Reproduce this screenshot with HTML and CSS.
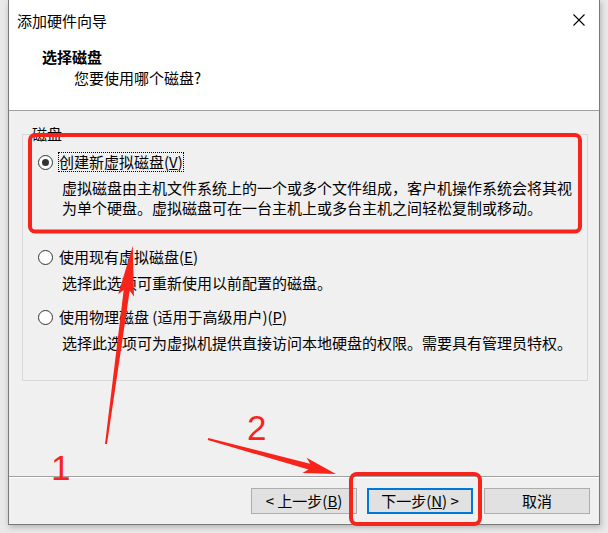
FILE: index.html
```html
<!DOCTYPE html>
<html lang="zh-CN">
  <head>
    <meta charset="UTF-8" />
    <meta name="viewport" content="width=device-width, initial-scale=1.0" />
    <title>添加硬件向导</title>
    <link rel="stylesheet" href="styles.css">
  </head>
  <body>
    <div class="window">
      <div class="top">
        <div class="titlebar">
          <span class="title">添加硬件向导</span>
          <span class="close">
            <svg width="12" height="12" viewBox="0 0 12 12"><path d="M0.5 0.5 L11.5 11.5 M11.5 0.5 L0.5 11.5" stroke="#000" stroke-width="1.1" fill="none"/></svg>
          </span>
        </div>
        <div class="head">
          <div class="head-title">选择磁盘</div>
          <div class="head-sub">您要使用哪个磁盘?</div>
        </div>
      </div>

      <div class="content">
        <fieldset class="group">
          <legend>磁盘</legend>
          <div class="opt opt-first">
            <div class="opt-row"><span class="radio checked"></span><span class="opt-label focus">创建新虚拟磁盘(<u>V</u>)</span></div>
            <p class="opt-desc">虚拟磁盘由主机文件系统上的一个或多个文件组成，客户机操作系统会将其视为单个硬盘。虚拟磁盘可在一台主机上或多台主机之间轻松复制或移动。</p>
          </div>
          <div class="opt">
            <div class="opt-row"><span class="radio"></span><span class="opt-label">使用现有虚拟磁盘(<u>E</u>)</span></div>
            <p class="opt-desc">选择此选项可重新使用以前配置的磁盘。</p>
          </div>
          <div class="opt">
            <div class="opt-row"><span class="radio"></span><span class="opt-label">使用物理磁盘 (适用于高级用户)(<u>P</u>)</span></div>
            <p class="opt-desc">选择此选项可为虚拟机提供直接访问本地硬盘的权限。需要具有管理员特权。</p>
          </div>
        </fieldset>
      </div>

      <div class="footer">
        <button class="btn">&lt; 上一步(<u>B</u>)</button>
        <button class="btn btn-default">下一步(<u>N</u>) &gt;</button>
        <button class="btn btn-cancel">取消</button>
      </div>
    </div>

    <svg class="marks" width="608" height="533" viewBox="0 0 608 533">
      <rect x="30" y="135" width="550" height="96.5" rx="5" fill="none" stroke="#f7241c" stroke-width="4"/>
      <rect x="351" y="474" width="129" height="50" rx="6" fill="none" stroke="#f7241c" stroke-width="4"/>
      <polygon fill="#f7241c" points="105,443.9 123.7,290 118.2,294.2 132.8,245.8 134,296.4 129.7,290.8 107,444.1"/>
      <polygon fill="#f7241c" points="208.3,438 310.1,463.8 306.6,457.7 336,474 302.4,473.1 308.5,469.6 207.7,440"/>
      <text x="51" y="480" class="mark-num">1</text>
      <text x="247" y="440" class="mark-num">2</text>
    </svg>
  </body>
</html>
```

FILE: styles.css
```css
body {
  margin: 0;
  width: 608px;
  height: 533px;
  overflow: hidden;
  background: #e9e9e9;
  font-family: "Noto Sans CJK SC", sans-serif;
  font-size: 15px;
  color: #000;
  position: relative;
}

.window {
  margin-left: 8px;
  width: 592px;
  height: 525px;
  box-sizing: border-box;
  border: 1px solid #7a7a7a;
  border-top: 0;
  background: #f0f0f0;
  box-shadow: 1px 2px 6px rgba(0, 0, 0, 0.25);
  display: flex;
  flex-direction: column;
}

.top {
  height: 110px;
  background: #fff;
  border-bottom: 1px solid #a0a0a0;
}
.titlebar {
  height: 38px;
  display: flex;
  justify-content: space-between;
  padding: 11px 0 0 8px;
  box-sizing: border-box;
  line-height: 20px;
}
.close {
  width: 12px;
  height: 12px;
  margin: 3px 14px 0 0;
}
.close svg {
  display: block;
}
.head {
  padding: 9px 0 0 33px;
  line-height: 20px;
}
.head-title {
  font-weight: bold;
}
.head-sub {
  padding-left: 32px;
  margin-top: 1px;
}

.content {
  flex: 1;
  padding: 13px 11px 0 13px;
}
.group {
  margin: 0;
  padding: 0 0 27px 0;
  border: 1px solid #d9d9d9;
  min-width: 0;
}
.group legend {
  margin-left: 9px;
  padding: 0;
  line-height: 20px;
}

.opt {
  padding-left: 15px;
  margin-top: 14px;
}
.opt-first {
  margin-top: 8px;
  margin-bottom: 29px;
}
.opt-first + .opt {
  margin-top: 0;
}
.opt-row {
  display: flex;
  align-items: center;
  height: 20px;
  line-height: 20px;
}
.radio {
  width: 15px;
  height: 15px;
  box-sizing: border-box;
  border: 1px solid #333;
  border-radius: 50%;
  background: #fff;
  margin-right: 6px;
  display: flex;
  align-items: center;
  justify-content: center;
}
.radio.checked::after {
  content: "";
  width: 7px;
  height: 7px;
  border-radius: 50%;
  background: #333;
}
.opt-label {
  padding: 0 1px 0 0;
}
.opt-label.focus {
  outline: 1px dotted #000;
  outline-offset: -1px;
  margin-left: -1px;
  padding-left: 1px;
}
.opt-desc {
  margin: 6px 0 0 0;
  padding: 0 6px 0 24px;
  line-height: 20px;
}

.footer {
  border-top: 1px solid #a0a0a0;
  box-shadow: inset 0 1px 0 #fff;
  padding: 11px 9px 10px 0;
  display: flex;
  justify-content: flex-end;
  gap: 0 10px;
}
.btn {
  width: 106px;
  height: 26px;
  box-sizing: border-box;
  border: 1px solid #adadad;
  background: #e1e1e1;
  font-family: "Noto Sans CJK SC", sans-serif;
  font-size: 15px;
  color: #000;
  line-height: 20px;
  padding: 0;
}
.btn-default {
  border: 2px solid #0078d7;
}
.btn-cancel {
  margin-left: 1px;
}

.marks {
  position: absolute;
  left: 0;
  top: 0;
  pointer-events: none;
}
.mark-num {
  font-family: "Liberation Sans", sans-serif;
  font-size: 35px;
  fill: #f7241c;
}
```
